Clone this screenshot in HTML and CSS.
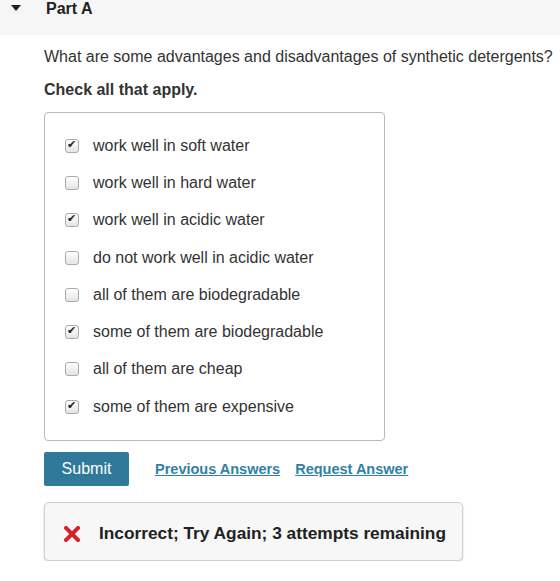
FILE: index.html
```html
<!DOCTYPE html>
<html lang="en">
<head>
  <meta charset="UTF-8" />
  <title>Part A</title>
  <link rel="stylesheet" href="styles.css">
</head>
<body>

  <div class="part-header">
    <span class="caret"></span>
    <h2>Part A</h2>
  </div>

  <div class="part-body">
    <p class="question">What are some advantages and disadvantages of synthetic detergents?</p>
    <p class="instructions">Check all that apply.</p>

    <div class="choices">
      <label class="choice"><span class="box checked"></span>work well in soft water</label>
      <label class="choice"><span class="box"></span>work well in hard water</label>
      <label class="choice"><span class="box checked"></span>work well in acidic water</label>
      <label class="choice"><span class="box"></span>do not work well in acidic water</label>
      <label class="choice"><span class="box"></span>all of them are biodegradable</label>
      <label class="choice"><span class="box checked"></span>some of them are biodegradable</label>
      <label class="choice"><span class="box"></span>all of them are cheap</label>
      <label class="choice"><span class="box checked"></span>some of them are expensive</label>
    </div>

    <div class="actions">
      <button class="submit">Submit</button>
      <a href="#" class="link">Previous Answers</a>
      <a href="#" class="link">Request Answer</a>
    </div>

    <div class="feedback">
      <svg class="cross" width="16" height="16" viewBox="0 0 16 16">
        <path d="M2 2 L14 14 M14 2 L2 14" stroke="#d2232a" stroke-width="4" stroke-linecap="square"/>
      </svg>
      <span>Incorrect; Try Again; 3 attempts remaining</span>
    </div>
  </div>

</body>
</html>
```

FILE: styles.css
```css
body {
  font-family: "Liberation Sans", Arial, sans-serif;
  margin: 0;
  color: #333;
  background: #fff;
}

.part-header {
  display: flex;
  align-items: flex-start;
  height: 35px;
  background-color: #f6f6f6;
  padding-left: 11px;
}

.caret {
  width: 0;
  height: 0;
  border-left: 5px solid transparent;
  border-right: 5px solid transparent;
  border-top: 6px solid #222;
  margin-right: 25px;
  margin-top: 5px;
}

.part-header h2 {
  margin: 0;
  font-size: 16px;
  line-height: 17px;
  font-weight: bold;
  color: #222;
}

.part-body {
  padding: 0 0 0 44px;
}

.question {
  margin: 13px 0 0;
  font-size: 16px;
  line-height: 18px;
  white-space: nowrap;
}

.instructions {
  margin: 15px 0 0;
  font-size: 16px;
  font-weight: bold;
  line-height: 18px;
}

.choices {
  width: 341px;
  box-sizing: border-box;
  margin-top: 13px;
  padding: 14px 0 15px 20px;
  border: 1px solid #b9b9b9;
  border-radius: 4px;
}

.choice {
  display: flex;
  align-items: center;
  height: 37.3px;
  font-size: 16px;
  color: #333;
}

.box {
  width: 12px;
  height: 12px;
  border: 1px solid #aaa;
  border-radius: 3px;
  background: linear-gradient(#fff, #e4e4e4);
  margin-right: 14px;
  box-sizing: content-box;
  position: relative;
}

.box.checked::after {
  content: "\2714";
  position: absolute;
  left: 1px;
  top: -2px;
  font-size: 11px;
  color: #222;
}

.actions {
  display: flex;
  align-items: center;
  margin-top: 11px;
}

.submit {
  width: 85px;
  height: 34px;
  background-color: #31799a;
  border: none;
  border-radius: 2px;
  color: #fff;
  font-family: "Liberation Sans", Arial, sans-serif;
  font-size: 16px;
  margin-right: 26px;
}

.link {
  color: #2f81a7;
  font-weight: bold;
  font-size: 14.5px;
  margin-right: 15px;
}

.feedback {
  display: flex;
  align-items: center;
  width: 419px;
  height: 59px;
  margin-top: 16px;
  padding: 4px 0 0 19px;
  box-sizing: border-box;
  background-color: #f7f7f7;
  border: 1px solid #cfcfcf;
  border-radius: 5px;
  box-shadow: 0 1px 2px rgba(0, 0, 0, 0.2);
  font-size: 17.3px;
  font-weight: bold;
  color: #222;
}

.cross {
  margin-right: 19px;
}
```
